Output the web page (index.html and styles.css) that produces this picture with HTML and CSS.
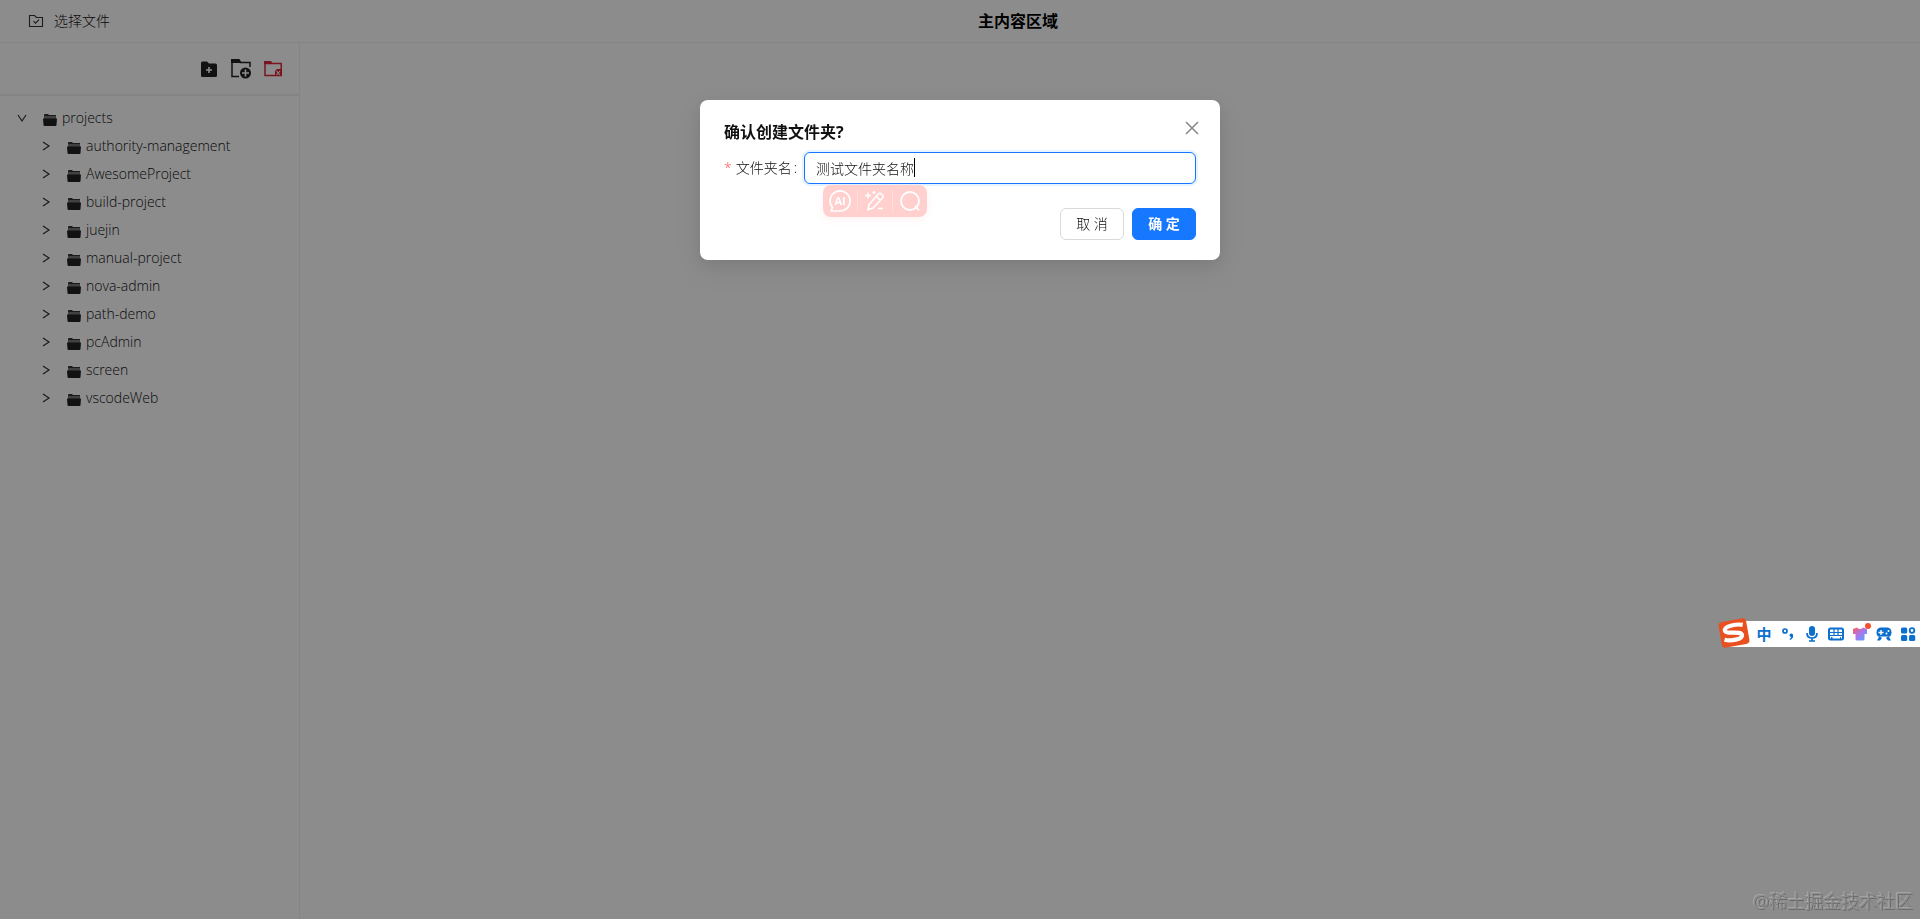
FILE: index.html
```html
<!DOCTYPE html>
<html lang="zh-CN">
<head>
    <meta charset="UTF-8">
    <meta name="viewport" content="width=device-width, initial-scale=1.0">
    <title>文件管理</title>
    <link rel="stylesheet" href="styles.css">
</head>
<body>

    <!-- Shared icons -->
    <svg class="sprite" aria-hidden="true">
        <symbol id="folder" viewBox="0 0 14 12">
            <path fill="#333" d="M1 1q0-1 1-1h3l1 1h7v3H1z"/>
            <path fill="#777" d="M1 2h12v3H1z"/>
            <path fill="#222" d="M0 4.500h14l-.5 6.500q0 1-1 1h-11q-1 0-1-1z"/>
        </symbol>
        <symbol id="arrow" viewBox="0 0 10 10">
            <path d="M2 1l6 4-6 4" fill="none" stroke="#333" stroke-width="1.2"/>
        </symbol>
    </svg>

    <!-- Header -->
    <header class="header">
        <button class="choose-btn">
            <svg width="16" height="14" viewBox="0 0 16 14" fill="none" stroke="#333" stroke-width="1.1"><path d="M1.5 1.5h5l2 2h6v9h-13z"/><path d="M5.5 7.2l2 2 3.5-3.6"/></svg>
            <span>选择文件</span>
        </button>
        <h1 class="header-title">主内容区域</h1>
    </header>

    <div class="layout">
        <!-- Sidebar -->
        <aside class="sidebar">
            <div class="toolbar">
                <button class="tool-btn" aria-label="新建文件">
                    <svg width="20" height="20" viewBox="0 0 20 20"><path fill="#222" d="M2 4q0-1.500 1.500-1.500H8l2 2h6.500Q18 4.500 18 6v10.500q0 1.500-1.500 1.500h-13Q2 18 2 16.500z"/><path d="M10 8v6M7 11h6" stroke="#fff" stroke-width="1.6"/></svg>
                </button>
                <button class="tool-btn" aria-label="新建文件夹">
                    <svg width="20" height="20" viewBox="0 0 20 20"><path fill="none" stroke="#222" stroke-width="1.5" d="M8 17.500H1V1.500h7l1.500 2h9.500V8"/><path fill="#222" d="M0 0h8.500l2 4H0z"/><circle cx="14.5" cy="14" r="5.5" fill="#222"/><path d="M14.500 10.500v7M11 14h7" stroke="#fff" stroke-width="1.6"/></svg>
                </button>
                <button class="tool-btn" aria-label="删除文件夹">
                    <svg width="20" height="20" viewBox="0 0 20 20"><path fill="none" stroke="#dd2637" stroke-width="1.5" d="M2 16.500V4.500h16.200v12z"/><path fill="#dd2637" d="M1 2h7l2 3H1zM12 17v-5l2-2h5v7z"/><path d="M13.500 12l3.500 4m0-4l-3.500 4" stroke="#fff" stroke-width="1.1"/></svg>
                </button>
            </div>
            <ul class="tree">
                <li>
                    <div class="tree-node"><svg class="arrow open"><use href="#arrow"/></svg><svg class="folder"><use href="#folder"/></svg><span>projects</span></div>
                    <ul class="tree-children">
                        <li class="tree-node"><svg class="arrow"><use href="#arrow"/></svg><svg class="folder"><use href="#folder"/></svg><span>authority-management</span></li>
                        <li class="tree-node"><svg class="arrow"><use href="#arrow"/></svg><svg class="folder"><use href="#folder"/></svg><span>AwesomeProject</span></li>
                        <li class="tree-node"><svg class="arrow"><use href="#arrow"/></svg><svg class="folder"><use href="#folder"/></svg><span>build-project</span></li>
                        <li class="tree-node"><svg class="arrow"><use href="#arrow"/></svg><svg class="folder"><use href="#folder"/></svg><span>juejin</span></li>
                        <li class="tree-node"><svg class="arrow"><use href="#arrow"/></svg><svg class="folder"><use href="#folder"/></svg><span>manual-project</span></li>
                        <li class="tree-node"><svg class="arrow"><use href="#arrow"/></svg><svg class="folder"><use href="#folder"/></svg><span>nova-admin</span></li>
                        <li class="tree-node"><svg class="arrow"><use href="#arrow"/></svg><svg class="folder"><use href="#folder"/></svg><span>path-demo</span></li>
                        <li class="tree-node"><svg class="arrow"><use href="#arrow"/></svg><svg class="folder"><use href="#folder"/></svg><span>pcAdmin</span></li>
                        <li class="tree-node"><svg class="arrow"><use href="#arrow"/></svg><svg class="folder"><use href="#folder"/></svg><span>screen</span></li>
                        <li class="tree-node"><svg class="arrow"><use href="#arrow"/></svg><svg class="folder"><use href="#folder"/></svg><span>vscodeWeb</span></li>
                    </ul>
                </li>
            </ul>
        </aside>
        <main class="content"></main>
    </div>

    <!-- Create folder dialog -->
    <div class="mask">
        <form class="modal" role="dialog" aria-labelledby="modalTitle">
            <div class="modal-header">
                <h2 id="modalTitle">确认创建文件夹?</h2>
                <button type="button" class="close-btn" aria-label="关闭">
                    <svg width="14" height="14" viewBox="0 0 14 14"><path d="M1 1l12 12M13 1L1 13" stroke="#888" stroke-width="1.5"/></svg>
                </button>
            </div>
            <div class="form-item">
                <label for="folderName"><span class="required">*</span>文件夹名<span class="colon">:</span></label>
                <div class="input-wrap">
                    <input type="text" id="folderName" value="测试文件夹名称">
                    <span class="caret"></span>
                    <!-- Assistant shortcuts under the input -->
                    <div class="ai-bar">
                        <button type="button" aria-label="AI">
                            <svg width="22" height="22" viewBox="0 0 22 22"><path d="M3.500 17.500A10 10 0 1 1 11 21H2z" fill="none" stroke="#fff" stroke-width="1.7" stroke-linejoin="round"/><text x="11" y="15" text-anchor="middle" class="ai-text">AI</text></svg>
                        </button>
                        <button type="button" aria-label="改写">
                            <svg width="22" height="22" viewBox="0 0 22 22" fill="none" stroke="#fff" stroke-width="1.6"><path d="M5 14.500L14.500 4q1.500-1.500 3.500.5t.5 3.500L9 18l-5 1.500zM12.500 6.500l4 4M4 2.500v6M1 5.500h6M10 1v3M8.500 2.500h3M14 18.500h5"/></svg>
                        </button>
                        <button type="button" aria-label="搜索">
                            <svg width="22" height="22" viewBox="0 0 22 22" fill="none" stroke="#fff" stroke-width="1.8"><circle cx="11" cy="11" r="9"/><path d="M16 16l4 4.500"/></svg>
                        </button>
                    </div>
                </div>
            </div>
            <div class="modal-footer">
                <button type="button" class="btn">取 消</button>
                <button type="submit" class="btn btn-primary">确 定</button>
            </div>
        </form>
    </div>

    <!-- Input method bar -->
    <div class="ime-bar">
        <svg class="ime-logo" width="32" height="32" viewBox="0 0 32 32"><g transform="rotate(-10 16 16)"><rect x="2" y="3" width="28" height="26" rx="4" fill="#e9501f"/><path d="M26 9.500C21 7.500 7.500 7 7.500 12c0 4.500 16.500 2.500 16 7.500-.5 4.500-12 4-18 1.500" fill="none" stroke="#fff" stroke-width="4.2"/></g></svg>
        <button aria-label="中文">
            <span class="ime-lang">中</span>
        </button>
        <button aria-label="标点">
            <svg width="16" height="16" viewBox="0 0 16 16"><circle cx="5" cy="5" r="2" fill="none" stroke="#0a6fcf" stroke-width="1.7"/><path d="M9.500 9q0-1.500 1.700-1.500 2 0 2 2.200 0 3-3.200 4.300l-.5-1q1.700-.8 1.700-2-1.700 0-1.700-2z" fill="#0a6fcf"/></svg>
        </button>
        <button aria-label="语音">
            <svg width="16" height="16" viewBox="0 0 16 16"><rect x="5" y="0" width="6" height="10" rx="3" fill="#0a6fcf"/><path d="M3 7q0 5 5 5t5-5M8 12v3M5 15h6" fill="none" stroke="#0a6fcf" stroke-width="1.7"/></svg>
        </button>
        <button aria-label="键盘">
            <svg width="16" height="16" viewBox="0 0 16 16"><rect x="1" y="2.500" width="14" height="11" rx="1.5" fill="#fff" stroke="#0a6fcf" stroke-width="2"/><path d="M6 3v7M10 3v7M2 6.500h12M2 9.500h12" stroke="#0a6fcf" stroke-width="1.2"/><path d="M3 12h1.500M12 12h1" stroke="#0a6fcf" stroke-width="2"/></svg>
        </button>
        <button class="ime-skin" aria-label="皮肤">
            <svg width="16" height="16" viewBox="0 0 16 16"><defs><linearGradient id="skin" x1="0" y1="0" x2="1" y2="1"><stop offset="0" stop-color="#ff5c5c"/><stop offset=".5" stop-color="#a878f0"/><stop offset="1" stop-color="#4aa8ff"/></linearGradient></defs><path fill="url(#skin)" d="M1 3l4-1.500q3 3 6 0L15 3v5h-2.500v5q0 1.500-1.500 1.500H5q-1.500 0-1.500-1.500V8H1z"/></svg>
        </button>
        <button aria-label="游戏">
            <svg width="16" height="16" viewBox="0 0 16 16"><path fill="#0a6fcf" d="M4 1.500h8q3.500 1 3.500 5 0 3-1.500 4H2Q.5 9.500.5 6.500q0-4 3.500-5z"/><path d="M5 4v5M2.500 6.500h5" stroke="#fff" stroke-width="1.4"/><circle cx="10.5" cy="7.5" r="1" fill="#fff"/><circle cx="12.5" cy="5" r="1" fill="#fff"/><path d="M3.500 10L1 14.500h3L6 12M12.500 10l2.500 4.500h-3L10 12" fill="#0a6fcf"/></svg>
        </button>
        <button aria-label="工具箱">
            <svg width="16" height="16" viewBox="0 0 16 16" fill="#0a6fcf"><rect x="1" y="1.5" width="6.2" height="6" rx="1.5"/><circle cx="12" cy="4.5" r="2.3" fill="none" stroke="#0a6fcf" stroke-width="1.8"/><rect x="1" y="9" width="6.2" height="6" rx="1.5"/><rect x="9" y="9" width="6.2" height="6" rx="1.5"/></svg>
        </button>
    </div>

    <div class="watermark">@稀土掘金技术社区</div>

</body>
</html>
```

FILE: styles.css
```css
* {
    box-sizing: border-box;
}

body {
    margin: 0;
    min-height: 100vh;
    display: flex;
    flex-direction: column;
    font-family: "Open Sans", "Noto Sans CJK SC", sans-serif;
    font-size: 14px;
    font-weight: 300;
    line-height: 20px;
    color: #111;
    background: #fff;
}

button {
    padding: 0;
    border: none;
    background: none;
    font: inherit;
    color: inherit;
    cursor: pointer;
}

svg {
    display: block;
    flex: none;
}

ul {
    list-style: none;
    margin: 0;
    padding: 0;
}

.sprite {
    position: absolute;
    width: 0;
    height: 0;
}

/* Header */
.header {
    display: flex;
    align-items: center;
    height: 43px;
    padding: 0 10px;
    border-bottom: 1px solid #f0f0f0;
}

.choose-btn {
    display: flex;
    align-items: center;
    gap: 10px;
    height: 32px;
    padding: 0 16px 0 18px;
}

.header-title {
    flex: 1;
    margin: 0;
    font-size: 16px;
    line-height: 24px;
    text-align: center;
    color: #000;
}

/* Sidebar */
.layout {
    flex: 1;
    display: flex;
}

.sidebar {
    width: 300px;
    border-right: 1px solid #f0f0f0;
}

.toolbar {
    display: flex;
    justify-content: flex-end;
    align-items: center;
    gap: 12px;
    height: 53px;
    padding: 0 16px;
    border-bottom: 2px solid #f0f0f0;
}

.tree {
    padding: 8px 17px;
}

.tree-children {
    padding-left: 24px;
}

.tree-node {
    display: flex;
    align-items: center;
    height: 28px;
}

.tree-node .arrow {
    width: 10px;
    height: 10px;
    margin-right: 16px;
}

.arrow.open {
    transform: rotate(90deg);
}

.tree-node .folder {
    width: 14px;
    height: 12px;
    margin: 4px 5px 0 0;
}

.content {
    flex: 1;
}

/* Dialog */
.mask {
    position: fixed;
    inset: 0;
    display: flex;
    justify-content: center;
    align-items: flex-start;
    padding-top: 100px;
    background: rgba(0, 0, 0, 0.45);
}

.modal {
    width: 520px;
    padding: 20px 24px;
    background: #fff;
    border-radius: 8px;
    box-shadow: 0 6px 16px rgba(0, 0, 0, 0.08), 0 9px 28px 8px rgba(0, 0, 0, 0.05);
}

.modal-header {
    display: flex;
    justify-content: space-between;
    align-items: flex-start;
    margin-bottom: 8px;
}

.modal-header h2 {
    margin: 0;
    font-size: 16px;
    line-height: 24px;
}

.close-btn {
    padding: 1px;
    margin-right: -4px;
}

.form-item {
    display: flex;
    align-items: center;
}

.form-item label {
    display: flex;
    width: 80px;
}

.required {
    margin-right: 4px;
    color: #ff4d4f;
}

.colon {
    margin-left: 2px;
}

.input-wrap {
    position: relative;
    flex: 1;
}

.input-wrap input {
    display: block;
    width: 100%;
    height: 32px;
    padding: 4px 11px;
    border: 1px solid #1677ff;
    border-radius: 6px;
    outline: none;
    box-shadow: 0 0 0 2px rgba(5, 145, 255, 0.1);
    font: inherit;
    color: inherit;
}

.caret {
    position: absolute;
    top: 6px;
    left: 110px;
    width: 1px;
    height: 19px;
    background: #000;
}

.ai-bar {
    position: absolute;
    top: 33px;
    left: 19px;
    display: flex;
    padding: 5px 0;
    border-radius: 8px;
    background: #ffd0ce;
    box-shadow: 0 2px 8px rgba(255, 77, 79, 0.08);
}

.ai-bar button {
    padding: 0 6px;
}

.ai-bar button + button {
    border-left: 1px solid #ffdedc;
}

.ai-text {
    font-size: 11px;
    font-weight: bold;
    fill: #fff;
}

.modal-footer {
    display: flex;
    justify-content: flex-end;
    gap: 8px;
    margin-top: 24px;
}

.btn {
    width: 64px;
    height: 32px;
    border: 1px solid #d9d9d9;
    border-radius: 6px;
    background: #fff;
}

.btn-primary {
    border-color: #1677ff;
    background: #1677ff;
    color: #fff;
    font-weight: bold;
}

/* Input method bar */
.ime-bar {
    position: fixed;
    right: 0;
    top: 621px;
    display: flex;
    align-items: center;
    height: 26px;
    padding-left: 26px;
    border-radius: 4px 0 0 4px;
    background: #fff;
    color: #0a6fcf;
}

.ime-logo {
    position: absolute;
    left: -8px;
    top: -4px;
}

.ime-bar button {
    display: flex;
    justify-content: center;
    width: 24px;
}

.ime-lang {
    font-size: 15px;
    line-height: 24px;
    font-weight: bold;
}

.ime-skin {
    position: relative;
}

.ime-skin::after {
    content: "";
    position: absolute;
    top: -3px;
    right: 1px;
    width: 6px;
    height: 6px;
    border-radius: 50%;
    background: #f5502a;
}

.watermark {
    position: fixed;
    right: 7px;
    bottom: 5px;
    font-size: 18px;
    line-height: 26px;
    color: #8f8f8f;
    text-shadow: 1px 1px 0 #666, -1px -1px 0 #aaa;
}
```
